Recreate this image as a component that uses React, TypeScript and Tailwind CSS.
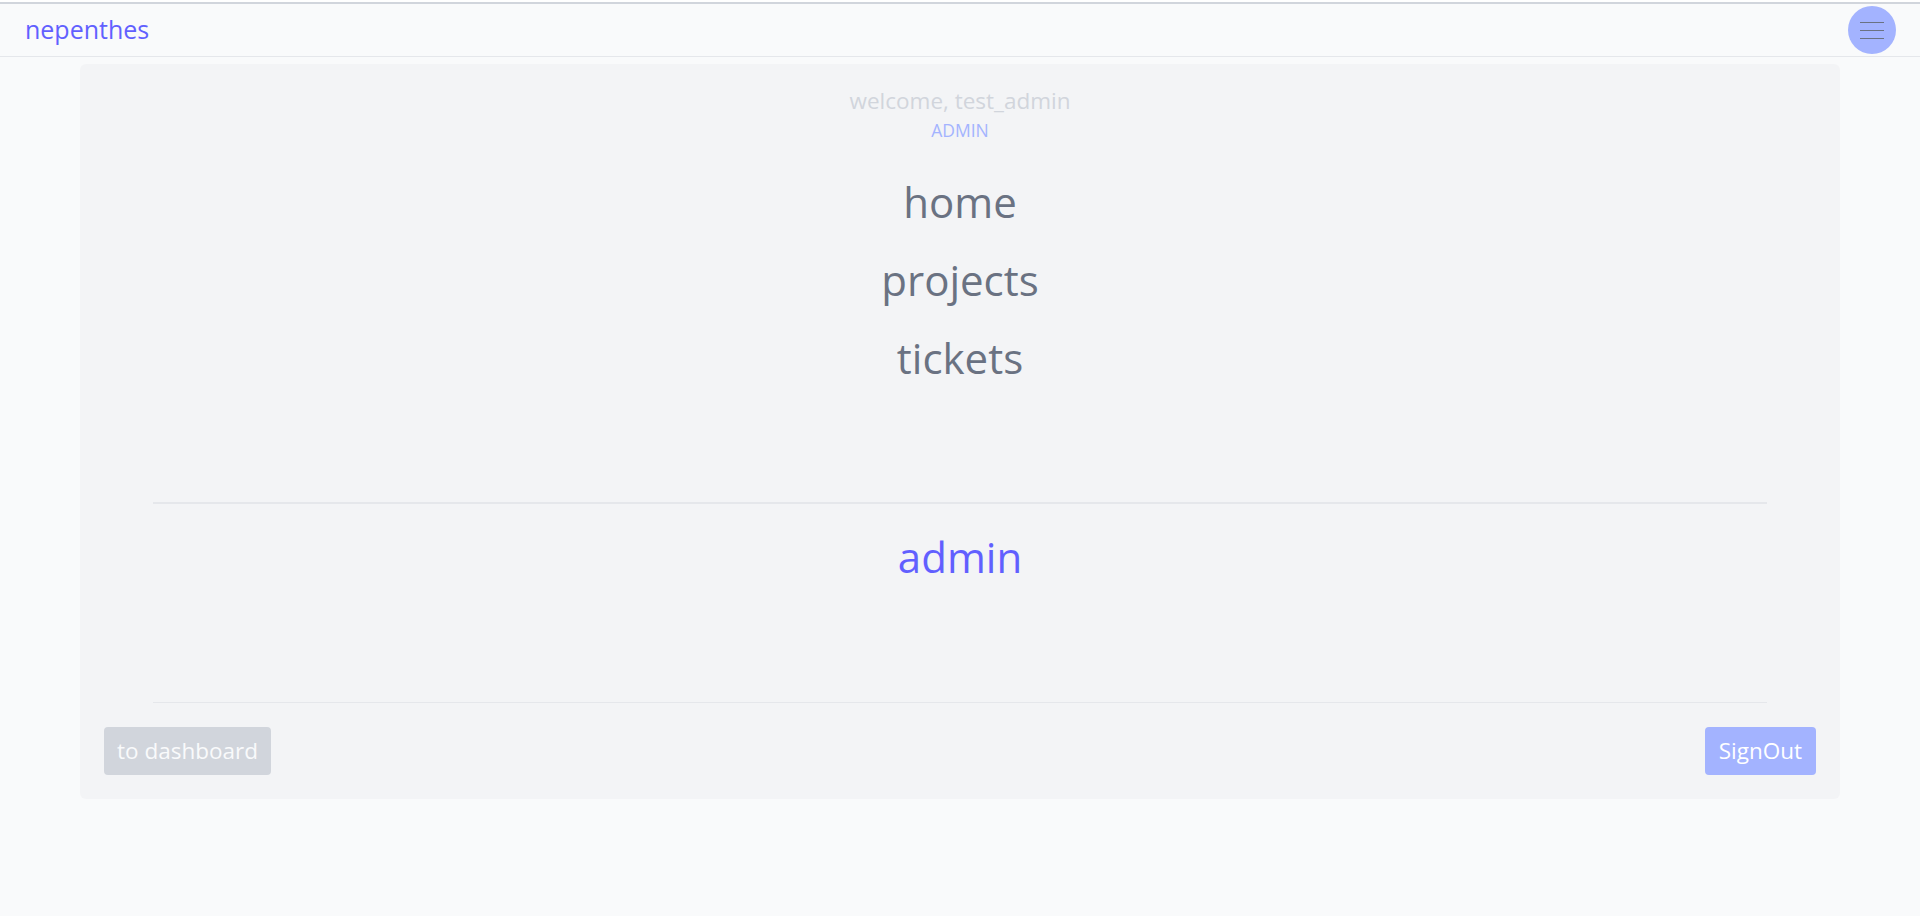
export default function App() {
  return (
    <div
      className="min-h-[916px] bg-gray-50"
      style={{ fontFamily: '"Open Sans", "Noto Sans", sans-serif' }}
    >
      <header className="mt-[2px] flex h-[55px] items-center justify-between border-t-2 border-b border-t-gray-300 border-b-gray-200 bg-gray-50 pl-[25px] pr-6">
        <a className="text-[25px] text-indigo-500" href="#">
          nepenthes
        </a>
        <button className="flex h-12 w-12 flex-col items-center justify-center gap-[7px] rounded-full bg-indigo-300">
          <span className="h-px w-6 bg-gray-500" />
          <span className="h-px w-6 bg-gray-500" />
          <span className="h-px w-6 bg-gray-500" />
        </button>
      </header>

      <main className="mx-auto mt-[7px] flex h-[735px] w-11/12 flex-col rounded-md bg-gray-100 py-6">
        <div className="text-center">
          <p className="text-[22.5px] leading-[26px] text-gray-300">welcome, test_admin</p>
          <p className="mt-1 text-[17.5px] leading-6 text-indigo-300">ADMIN</p>
        </div>

        <nav className="mt-[39px] flex flex-col items-center gap-9 text-[42px] leading-none text-gray-500">
          <a href="#">home</a>
          <a href="#">projects</a>
          <a href="#">tickets</a>
        </nav>

        <hr className="mx-auto mt-auto w-11/12 border-t-2 border-gray-200" />

        <div className="flex h-[198px] justify-center pt-[32px]">
          <a href="#" className="h-[42px] text-[42px] leading-none text-indigo-500">
            admin
          </a>
        </div>

        <hr className="mx-auto w-11/12 border-gray-200" />

        <div className="mt-6 flex items-center justify-between px-6">
          <button className="h-12 rounded bg-gray-300 px-[13px] text-[22.5px] text-gray-50">
            to dashboard
          </button>
          <button className="h-12 rounded bg-indigo-300 px-[14px] text-[22.5px] text-white">
            SignOut
          </button>
        </div>
      </main>
    </div>
  );
}
